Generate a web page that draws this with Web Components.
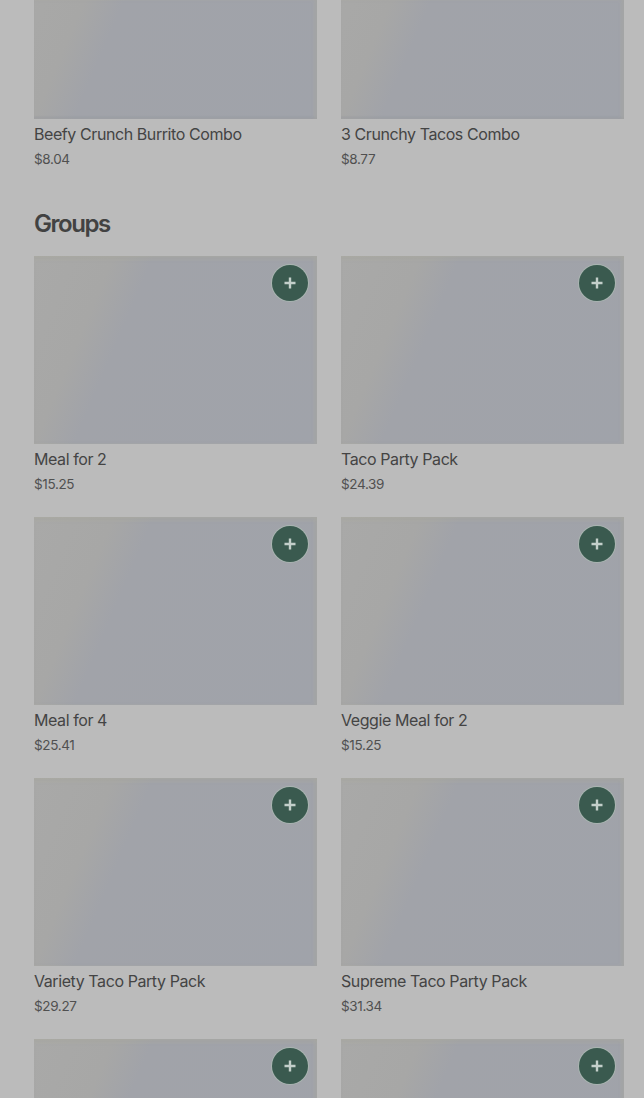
<!DOCTYPE html>
<html>
<head>
<meta charset="utf-8">
<style>
html, body { margin: 0; height: 1098px; overflow: hidden; background: #bbbbbb; }
body { font-family: Inter, "Liberation Sans", sans-serif; color: #3b3b3b; }
</style>
</head>
<body>
<menu-page>
  <menu-grid>
    <menu-card name="Beefy Crunch Burrito Combo" price="$8.04" cut></menu-card>
    <menu-card name="3 Crunchy Tacos Combo" price="$8.77" cut></menu-card>
  </menu-grid>
  <menu-section title="Groups">
    <menu-grid>
      <menu-card name="Meal for 2" price="$15.25"></menu-card>
      <menu-card name="Taco Party Pack" price="$24.39"></menu-card>
      <menu-card name="Meal for 4" price="$25.41"></menu-card>
      <menu-card name="Veggie Meal for 2" price="$15.25"></menu-card>
      <menu-card name="Variety Taco Party Pack" price="$29.27"></menu-card>
      <menu-card name="Supreme Taco Party Pack" price="$31.34"></menu-card>
      <menu-card></menu-card>
      <menu-card></menu-card>
    </menu-grid>
  </menu-section>
</menu-page>
<script>
class MenuPage extends HTMLElement {
    constructor() {
        super();
        this.attachShadow({ mode: "open" });
        this.shadowRoot.innerHTML = `<style>
            :host { display: block; padding: 0 20px 0 34px; }
        </style><slot></slot>`;
    }
}
class MenuGrid extends HTMLElement {
    constructor() {
        super();
        this.attachShadow({ mode: "open" });
        this.shadowRoot.innerHTML = `<style>
            :host { display: grid; grid-template-columns: 283px 283px; column-gap: 24px; row-gap: 20px; }
        </style><slot></slot>`;
    }
}
class MenuSection extends HTMLElement {
    constructor() {
        super();
        this.attachShadow({ mode: "open" });
        this.shadowRoot.innerHTML = `<style>
            :host { display: block; margin-top: 36px; }
            h2 {
                margin: 0 0 16px;
                font-size: 24px;
                line-height: 32px;
                font-weight: 600;
                letter-spacing: -1.45px;
                color: #424242;
            }
        </style>
        <h2 id="title"></h2>
        <slot></slot>`;
    }
    connectedCallback() {
        this.shadowRoot.querySelector("#title").textContent = this.getAttribute("title");
    }
}
class AddButton extends HTMLElement {
    constructor() {
        super();
        this.attachShadow({ mode: "open" });
        this.shadowRoot.innerHTML = `<style>
            :host {
                display: flex;
                position: absolute;
                top: 9px;
                right: 9px;
                width: 36px;
                height: 36px;
                border-radius: 50%;
                align-items: center;
                justify-content: center;
                background: #3a5a4f;
                box-shadow: 0 0 0 1px #a9b5b1;
            }
            svg { width: 14px; height: 14px; display: block; }
        </style>
        <svg viewBox="0 0 14 14"><path d="M7 1.5v11M1.5 7h11" stroke="#c3cfca" stroke-width="2.4" fill="none"/></svg>`;
    }
}
class MenuCard extends HTMLElement {
    constructor() {
        super();
        this.attachShadow({ mode: "open" });
        this.shadowRoot.innerHTML = `<style>
            :host { display: block; }
            .image {
                position: relative;
                height: 188px;
                background: linear-gradient(113deg, #a9a9a8 0%, #a7a7a6 22%, #a1a3a9 33%, #a0a3aa 100%) bottom / 100% 188px no-repeat;
                box-shadow: inset -3px 0 3px rgba(168,168,160,.45), inset 0 5px 3px -1px rgba(168,168,160,.45);
            }
            :host([cut]) .image {
                height: 119px;
                box-shadow: inset -3px 0 3px rgba(168,168,160,.45), inset 0 -3px 2px -1px rgba(150,152,162,.5);
            }
            .name { margin-top: 3px; font-size: 16px; line-height: 24px; color: #444444; letter-spacing: -0.42px; }
            .price { font-size: 13.5px; line-height: 20px; margin-top: 3px; margin-bottom: 3px; color: #505050; letter-spacing: -0.35px; }
        </style>
        <div class="image"><add-button id="add"></add-button></div>
        <div class="name" id="name"></div>
        <div class="price" id="price"></div>`;
    }
    connectedCallback() {
        this.shadowRoot.querySelector("#name").textContent = this.getAttribute("name") || "";
        this.shadowRoot.querySelector("#price").textContent = this.getAttribute("price") || "";
        if (this.hasAttribute("cut")) {
            this.shadowRoot.querySelector("#add").remove();
        }
    }
}
customElements.define("menu-page", MenuPage);
customElements.define("menu-grid", MenuGrid);
customElements.define("menu-section", MenuSection);
customElements.define("add-button", AddButton);
customElements.define("menu-card", MenuCard);
</script>
</body>
</html>
